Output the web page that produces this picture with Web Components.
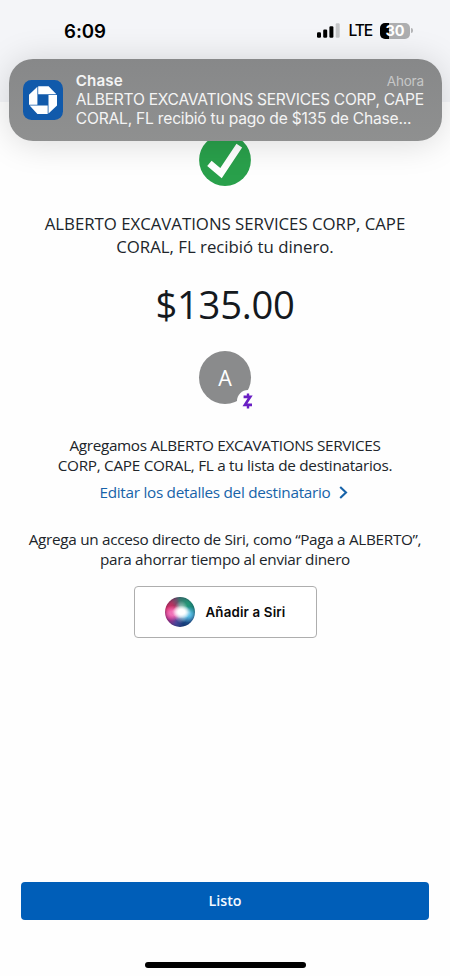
<!DOCTYPE html>
<html lang="es">
<head>
<meta charset="utf-8">
<title>Chase</title>
<style>
html, body { margin: 0; height: 976px; overflow: hidden; background: #fefefe; }
</style>
</head>
<body>
<payment-screen></payment-screen>
<script>
const define = (name, markup, setup) => {
  const template = document.createElement('template');
  template.innerHTML = markup;
  customElements.define(name, class extends HTMLElement {
    constructor() {
      super();
      this.attachShadow({ mode: 'open' }).append(template.content.cloneNode(true));
    }
    connectedCallback() { if (setup) setup(this); }
  });
};

/* One line of text; "fit" is its advance width, reached by tracking. */
define('text-line', `
<style>
:host { display: block; white-space: nowrap; }
span { display: inline-block; }
</style><span><slot></slot></span>`, el => {
  const fit = parseFloat(el.getAttribute('fit'));
  const span = el.shadowRoot.querySelector('span');
  if (!fit) return;
  const n = el.textContent.length;
  const gap = (fit - span.getBoundingClientRect().width) / n;
  span.style.letterSpacing = gap.toFixed(4) + 'px';
});

define('signal-bars', `
<style>:host { display: block; width: 23px; height: 15px; } svg { display: block; }</style>
<svg width="23" height="15" viewBox="0 0 23 15">
<rect x="0" y="9.3" width="4" height="5.4" rx="1.2"/><rect x="6.2" y="6.5" width="4" height="8.2" rx="1.2"/>
<rect x="12.4" y="3.3" width="4" height="11.4" rx="1.2"/><rect x="18.7" y="0.3" width="4" height="14.4" rx="1.2" fill="#c5c6c8"/>
</svg>`);

define('battery-level', `
<style>
:host { display: flex; align-items: center; gap: 1px; }
.cell { width: 30px; height: 16px; border-radius: 5px; background: linear-gradient(90deg, #000 9.3px, #adaeb0 9.3px); color: #fff; font: 700 14.5px/16px Inter, sans-serif; text-align: center; }
.tip { width: 2px; height: 5px; border-radius: 0 2px 2px 0; background: #b4b5b7; }
</style><div class="cell"><slot></slot></div><div class="tip"></div>`);

define('status-bar', `
<style>
:host { display: flex; box-sizing: border-box; height: 102px; padding: 19.5px 37px 0 64px; background: #f4f5f8; justify-content: space-between; align-items: flex-start; font-family: Inter, sans-serif; color: #000; }
.time { font-size: 18.7px; font-weight: 600; line-height: 23px; }
.right { display: flex; align-items: center; height: 22px; }
.lte { font-size: 15.6px; font-weight: 500; line-height: 22px; margin: 1px 8px 0 9px; }
</style>
<text-line class="time" fit="42">6:09</text-line>
<div class="right"><signal-bars></signal-bars><text-line class="lte" fit="23.5">LTE</text-line><battery-level>30</battery-level></div>`);

define('chase-icon', `
<style>:host { display: block; width: 40px; height: 40px; } svg { display: block; }</style>
<svg width="40" height="40" viewBox="0 0 40 40">
<rect width="40" height="40" rx="8.5" fill="#115aab"/>
<g fill="#fff">
<path d="M15.2 6.2H25.6L33.4 14.2H15.2Z"/>
<path d="M34 15V25.4L25.5 33.4V15Z"/>
<path d="M24.7 34H14.4L6.6 25.6H24.7Z"/>
<path d="M6 24.8V14.7L14.4 6.7V24.8Z"/>
</g></svg>`);

define('push-notification', `
<style>
:host { position: absolute; left: 8.5px; top: 58.5px; box-sizing: border-box; width: 433px; height: 82px; border-radius: 24px; background: linear-gradient(180deg, #878889, #8f9090); box-shadow: 0 2px 34px rgba(0,0,0,.15); padding: 12.5px 18px 0 14.5px; display: flex; gap: 12.8px; font-family: Inter, sans-serif; color: #f4f4f4; }
chase-icon { flex: none; margin-top: 9px; }
.body { flex: 1; }
.head { display: flex; justify-content: space-between; height: 18.5px; }
.app { font-size: 15.2px; font-weight: 600; line-height: 19px; }
.when { font-size: 13.5px; line-height: 20px; color: #c6c7c7; }
.msg { font-size: 15.6px; line-height: 19px; }
</style>
<chase-icon></chase-icon>
<div class="body">
<div class="head"><text-line class="app" fit="47">Chase</text-line><text-line class="when" fit="37">Ahora</text-line></div>
<text-line class="msg" fit="348">ALBERTO EXCAVATIONS SERVICES CORP, CAPE</text-line>
<text-line class="msg" fit="335.5">CORAL, FL recibió tu pago de $135 de Chase...</text-line>
</div>`);

define('success-check', `
<style>:host { display: block; width: 52px; height: 52px; } svg { display: block; }</style>
<svg width="52" height="52" viewBox="0 0 52 52"><circle cx="26" cy="26" r="25.9" fill="#29a04b"/>
<path d="M10.4 29.3 22 39.2 40.3 11.6" fill="none" stroke="#fff" stroke-width="6.8" stroke-linejoin="miter"/></svg>`);

define('zelle-avatar', `
<style>
:host { display: block; position: relative; width: 52px; height: 53px; border-radius: 50%; background: #8a8b8c; color: #fff; font: 21.5px/54px "Open Sans", sans-serif; text-align: center; }
svg { position: absolute; left: 38px; top: 38.5px; }
</style><slot></slot>
<svg width="22" height="22" viewBox="0 0 22 22"><circle cx="11" cy="11" r="11" fill="#fefefe"/>
<g fill="none" stroke="#6a1fc4" stroke-width="2.7"><path d="M6.6 6.8H13.2L8 14.8H15"/><path d="M11 3.4V6.8M11 14.8V18.4" stroke-width="2.4"/></g></svg>`);

define('siri-orb', `
<style>
:host { display: block; width: 30px; height: 30px; border-radius: 50%;
background:
 radial-gradient(ellipse 32% 22% at 55% 50%, #fff 0 35%, rgba(255,255,255,0) 100%),
 radial-gradient(ellipse 25% 38% at 54% 50%, rgba(255,255,255,.8) 0 15%, rgba(255,255,255,0) 100%),
 radial-gradient(ellipse at 76% 58%, rgba(95,195,235,.95) 0 8%, rgba(60,160,220,0) 34%),
 radial-gradient(ellipse at 27% 54%, rgba(245,120,190,.9) 0 10%, rgba(235,80,160,0) 34%),
 conic-gradient(from 0deg, #38796f, #219777 45deg, #167d78 85deg, #235c94 120deg, #173f7c 165deg, #4a459a 200deg, #b22a85 240deg, #e02a68 280deg, #b23460 315deg, #704f6b 342deg, #38796f);
box-shadow: inset 0 0 2px 1px rgba(30,35,75,.35); }
</style>`);

define('siri-button', `
<style>
:host { display: flex; box-sizing: border-box; width: 183px; height: 52px; border: 1px solid #aeaeae; border-radius: 4px; background: #fff; align-items: center; padding-left: 30px; gap: 11px; font: 600 13.3px/20px Inter, sans-serif; color: #0a0a0a; }
</style><siri-orb></siri-orb><text-line fit="80">Añadir a Siri</text-line>`);

define('edit-link', `
<style>
:host { display: flex; align-items: center; height: 20px; gap: 8px; color: #1763a9; }
svg { display: block; margin-top: 1px; }
</style><slot></slot>
<svg width="9" height="13" viewBox="0 0 9 13"><path d="M1.2 1 7 6.5 1.2 12" fill="none" stroke="currentColor" stroke-width="2.1"/></svg>`);

define('primary-button', `
<style>
:host { display: block; height: 37.5px; border-radius: 4px; background: #005eb8; color: #f4f9ff; text-align: center; font: 600 14.3px/38px "Open Sans", sans-serif; }
</style><text-line fit="34"><slot></slot></text-line>`);

define('payment-screen', `
<style>
:host { position: relative; display: flex; flex-direction: column; width: 450px; height: 976px; overflow: hidden; background: #fefefe; font-family: "Open Sans", sans-serif; color: #20252a; }
main { flex: 1; display: flex; flex-direction: column; align-items: center; text-align: center; padding-top: 32px; }
.received { margin-top: 27px; font-size: 16.8px; line-height: 22.6px; }
.amount { margin-top: 20px; font-size: 38.2px; line-height: 52px; color: #14191e; }
zelle-avatar { margin-top: 21px; }
.added { margin-top: 31px; font-size: 15.3px; line-height: 20px; }
edit-link { margin: 6.6px 0 0 -3px; font-size: 15.3px; line-height: 20px; }
.siri { margin-top: 27.4px; font-size: 15.3px; line-height: 20px; }
siri-button { margin-top: 17px; }
footer { display: flex; flex-direction: column; padding: 0 21px 8.5px; }
.home { align-self: center; width: 161px; height: 5.5px; border-radius: 3px; background: #000; margin: 42.5px 0 0 1px; }
</style>
<status-bar></status-bar>
<main>
<success-check></success-check>
<div class="received"><text-line fit="360.5">ALBERTO EXCAVATIONS SERVICES CORP, CAPE</text-line><text-line fit="217.5">CORAL, FL recibió tu dinero.</text-line></div>
<text-line class="amount" fit="139">$135.00</text-line>
<zelle-avatar>A</zelle-avatar>
<div class="added"><text-line fit="311">Agregamos ALBERTO EXCAVATIONS SERVICES</text-line><text-line fit="334.5">CORP, CAPE CORAL, FL a tu lista de destinatarios.</text-line></div>
<edit-link><text-line fit="231">Editar los detalles del destinatario</text-line></edit-link>
<div class="siri"><text-line fit="392.5">Agrega un acceso directo de Siri, como “Paga a ALBERTO”,</text-line><text-line fit="250">para ahorrar tiempo al enviar dinero</text-line></div>
<siri-button></siri-button>
</main>
<footer><primary-button>Listo</primary-button><div class="home"></div></footer>
<push-notification></push-notification>`);
</script>
</body>
</html>
